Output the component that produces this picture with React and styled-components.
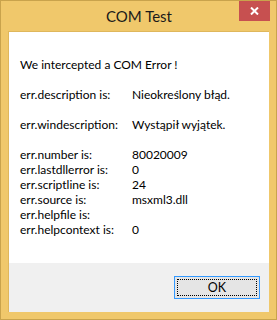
import React from 'react'
import styled, { createGlobalStyle } from 'styled-components'

const Global = createGlobalStyle`
  html, body { margin: 0; padding: 0; background: #fff; }
  body { font-family: Lato, "Open Sans", sans-serif; }
`

const Window = styled.div`
  width: 277px;
  height: 320px;
  box-sizing: border-box;
  border: 1px solid #c9a34c;
  background: #f0c86b;
  display: flex;
  flex-direction: column;
  padding: 0 7px 7px 7px;
`

const TitleBar = styled.div`
  height: 30px;
  display: grid;
  grid-template-columns: 1fr auto 1fr;
  align-items: start;
  margin: 0 -1px 0 0;
`

const Title = styled.div`
  grid-column: 2;
  font-size: 15px;
  line-height: 30px;
  color: #1a1a1a;
`

const CloseButton = styled.div`
  grid-column: 3;
  justify-self: end;
  width: 31px;
  height: 20px;
  background: #c75050;
  display: flex;
  align-items: center;
  justify-content: center;
`

const Client = styled.div`
  flex: 1;
  display: flex;
  flex-direction: column;
  border: 1px solid #dfb75c;
  border-width: 1px 0 0 1px;
`

const Message = styled.div`
  flex: 1;
  background: #fff;
  padding: 25px 12px 0 11px;
  font-size: 12px;
  line-height: 15px;
  color: #000;
`

const Group = styled.div`
  margin-bottom: ${({ $space }) => $space}px;
`

const Row = styled.div`
  display: grid;
  grid-template-columns: 112px 1fr;
  height: 15px;
  white-space: nowrap;
`

const Footer = styled.div`
  height: 49px;
  background: #f0f0f0;
  display: flex;
  justify-content: flex-end;
  align-items: flex-start;
  padding: 13px 9px 0 0;
  box-sizing: border-box;
`

const Button = styled.button`
  width: 86px;
  height: 23px;
  box-sizing: border-box;
  border: 1px solid #3399ff;
  background: #e5e5e5;
  padding: 0;
  position: relative;
  font-family: inherit;
  font-size: 12.5px;
  color: #000;
  &::after {
    content: '';
    position: absolute;
    inset: 2px;
    border: 1px dotted #000;
  }
`

const groups = [
  { space: 15, rows: [['We intercepted a COM Error !', null]] },
  { space: 15, rows: [['err.description is:', 'Nieokreślony błąd.']] },
  { space: 15, rows: [['err.windescription:', 'Wystąpił wyjątek.']] },
  {
    space: 0,
    rows: [
      ['err.number is:', '80020009'],
      ['err.lastdllerror is:', '0'],
      ['err.scriptline is:', '24'],
      ['err.source is:', 'msxml3.dll'],
      ['err.helpfile is:', ''],
      ['err.helpcontext is:', '0'],
    ],
  },
]

export default function App() {
  return (
    <>
      <Global />
      <Window>
        <TitleBar>
          <Title>COM Test</Title>
          <CloseButton>
            <svg width="9" height="8" viewBox="0 0 9 8">
              <path d="M1 0.5 L8 7.5 M8 0.5 L1 7.5" stroke="#fff" strokeWidth="2" />
            </svg>
          </CloseButton>
        </TitleBar>
        <Client>
          <Message>
            {groups.map((g, i) => (
              <Group key={i} $space={g.space}>
                {g.rows.map(([label, value], j) => (
                  <Row key={j}>
                    <span>{label}</span>
                    {value !== null && <span>{value}</span>}
                  </Row>
                ))}
              </Group>
            ))}
          </Message>
          <Footer>
            <Button>OK</Button>
          </Footer>
        </Client>
      </Window>
    </>
  )
}
